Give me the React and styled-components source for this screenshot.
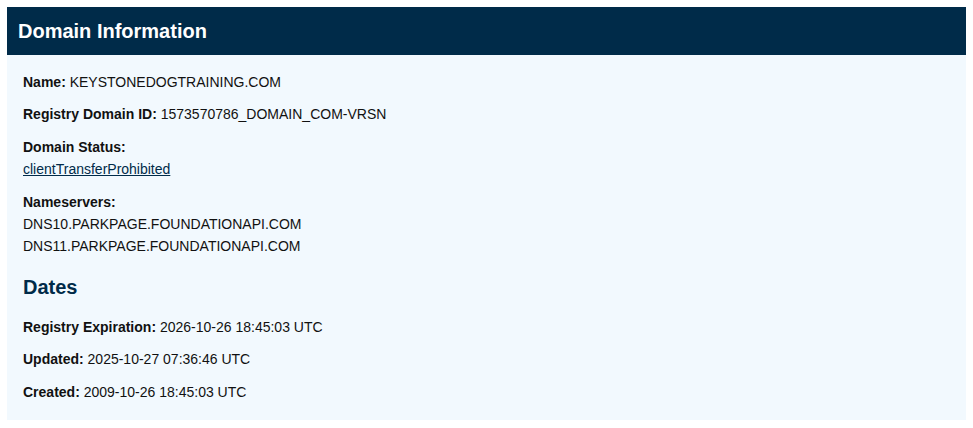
import React from "react";
import styled, { createGlobalStyle } from "styled-components";

const navy = "#002b49";

const GlobalStyle = createGlobalStyle`
  body {
    margin: 7px;
    background: #ffffff;
    font-family: "Liberation Sans", Arial, sans-serif;
    color: #111111;
  }
`;

const Card = styled.section`
  background: #f2f9fe;
  box-shadow: 0 1px 5px rgba(0, 0, 0, 0.14);
`;

const Header = styled.header`
  background: ${navy};
  padding: 10px 11px;
`;

const Title = styled.h2`
  margin: 0;
  font-size: 20px;
  line-height: 28px;
  font-weight: 700;
  color: #ffffff;
`;

const Body = styled.div`
  padding: 16px 16px 7px;
  font-size: 14px;
  line-height: 1.6;
`;

const Field = styled.p`
  margin: 0 0 10px;
`;

const Label = styled.strong`
  font-weight: 700;
`;

const Line = styled.span`
  display: block;
`;

const StatusLink = styled.a`
  display: block;
  color: ${navy};
  text-decoration: underline;
`;

const SectionTitle = styled.h3`
  margin: 17px 0 17px;
  font-size: 20px;
  line-height: 24px;
  font-weight: 700;
  color: ${navy};
`;

const domain = {
  name: "KEYSTONEDOGTRAINING.COM",
  id: "1573570786_DOMAIN_COM-VRSN",
  status: ["clientTransferProhibited"],
  nameservers: ["DNS10.PARKPAGE.FOUNDATIONAPI.COM", "DNS11.PARKPAGE.FOUNDATIONAPI.COM"],
};

const dates = [
  ["Registry Expiration", "2026-10-26 18:45:03 UTC"],
  ["Updated", "2025-10-27 07:36:46 UTC"],
  ["Created", "2009-10-26 18:45:03 UTC"],
];

export default function App() {
  return (
    <>
      <GlobalStyle />
      <Card>
        <Header>
          <Title>Domain Information</Title>
        </Header>
        <Body>
          <Field>
            <Label>Name:</Label> {domain.name}
          </Field>
          <Field>
            <Label>Registry Domain ID:</Label> {domain.id}
          </Field>
          <Field>
            <Label>Domain Status:</Label>
            {domain.status.map((s) => (
              <StatusLink key={s} href="#">
                {s}
              </StatusLink>
            ))}
          </Field>
          <Field>
            <Label>Nameservers:</Label>
            {domain.nameservers.map((ns) => (
              <Line key={ns}>{ns}</Line>
            ))}
          </Field>
          <SectionTitle>Dates</SectionTitle>
          {dates.map(([label, value]) => (
            <Field key={label}>
              <Label>{label}:</Label> {value}
            </Field>
          ))}
        </Body>
      </Card>
    </>
  );
}
